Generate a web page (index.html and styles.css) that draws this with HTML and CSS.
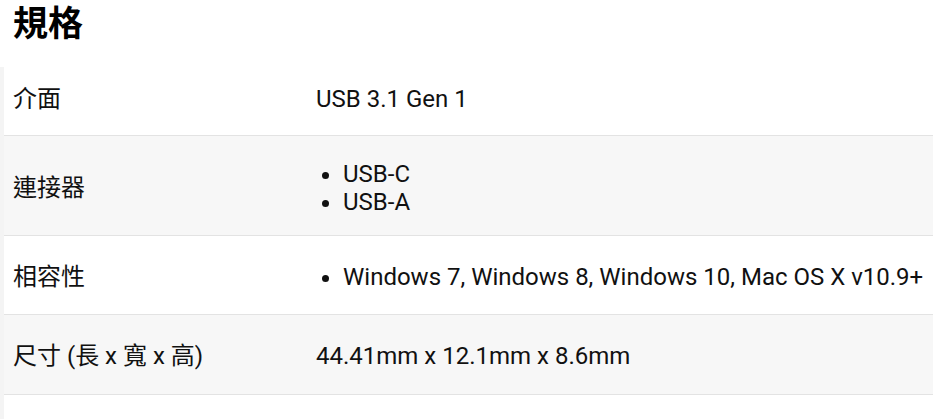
FILE: index.html
```html
<!DOCTYPE html>
<html lang="zh-Hant">
<head>
<meta charset="utf-8">
<title>規格</title>
<link rel="stylesheet" href="styles.css">
</head>
<body>
<h2 class="title">規格</h2>
<div class="specs">
  <div class="row row-a">
    <div class="label">介面</div>
    <div class="value">USB 3.1 Gen 1</div>
  </div>
  <div class="row row-b alt">
    <div class="label">連接器</div>
    <div class="value">
      <ul class="list">
        <li>USB-C</li>
        <li>USB-A</li>
      </ul>
    </div>
  </div>
  <div class="row row-c">
    <div class="label">相容性</div>
    <div class="value">
      <ul class="list">
        <li>Windows 7, Windows 8, Windows 10, Mac OS X v10.9+</li>
      </ul>
    </div>
  </div>
  <div class="row row-d alt">
    <div class="label">尺寸 (長 x 寬 x 高)</div>
    <div class="value">44.41mm x 12.1mm x 8.6mm</div>
  </div>
  <div class="row row-e">
    <div class="label"></div>
    <div class="value"></div>
  </div>
</div>
</body>
</html>
```
FILE: styles.css
```css
html, body {
  margin: 0;
  padding: 0;
  background: #ffffff;
}
body {
  font-family: Roboto, "Noto Sans CJK TC", sans-serif;
  color: #111111;
  overflow: hidden;
}
.title {
  margin: 0;
  padding: 2px 0 0 13px;
  height: 67px;
  box-sizing: border-box;
  font-size: 35px;
  font-weight: 700;
  line-height: 46px;
  color: #000000;
}
.specs {
  border-left: 4px solid #f4f4f4;
}
.row {
  display: grid;
  grid-template-columns: 312px 1fr;
  align-items: center;
  border-bottom: 1px solid #e3e3e3;
  font-size: 24px;
  line-height: 28px;
  box-sizing: border-box;
  padding-top: 4px;
}
.row.alt {
  background: #f7f7f7;
}
.row-a { height: 69px; padding-top: 0; padding-bottom: 4px; }
.row-b { height: 100px; }
.row-c { height: 79px; }
.row-d { height: 80px; padding-top: 3px; }
.row-e { height: 40px; border-bottom: none; }
.label {
  padding-left: 9px;
}
.list {
  margin: 0;
  padding-left: 27px;
  list-style: disc;
}
```
